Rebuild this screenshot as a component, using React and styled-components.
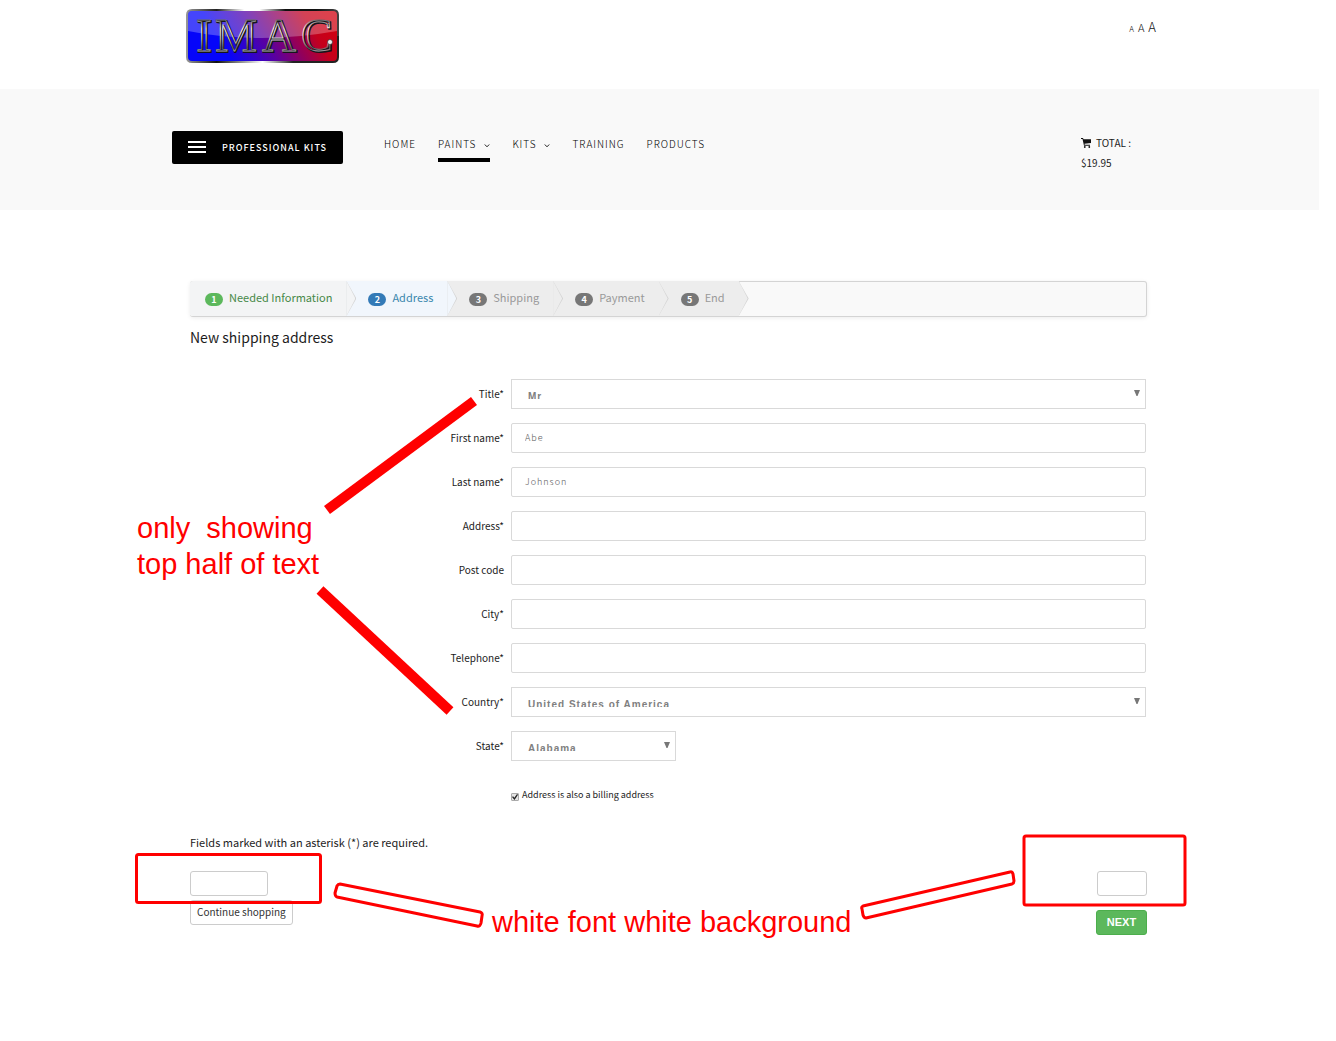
import React from 'react';
import styled, { createGlobalStyle } from 'styled-components';

const GlobalStyle = createGlobalStyle`
  * {
    box-sizing: border-box;
  }

  body {
    margin: 0;
    background: #fff;
    color: #1c1c1c;
    font-family: 'Noto Sans CJK SC', 'Open Sans', sans-serif;
    font-size: 10px;
    line-height: 20px;
  }

  a {
    color: inherit;
    text-decoration: none;
  }
`;

const Page = styled.div`
  position: relative;
  overflow: hidden;
  min-height: 100vh;
`;

// Header

const TopBar = styled.div`
  display: flex;
  justify-content: space-between;
  align-items: flex-start;
  max-width: 996px;
  margin: 0 auto;
  padding: 8px 10px 25px 16px;
`;

const Logo = styled.a`
  display: block;

  svg {
    display: block;
  }
`;

const FontSizer = styled.div`
  display: flex;
  align-items: baseline;
  gap: 4px;
  margin-top: 9px;
`;

const FontSizeButton = styled.button`
  padding: 0;
  border: 0;
  background: none;
  color: #111;
  font-family: inherit;
  font-size: ${(props) => props.$size};
  font-weight: 300;
  line-height: 20px;
`;

const NavBand = styled.div`
  margin-right: 17px;
  background: #f9f9f9;
`;

const NavInner = styled.div`
  display: flex;
  justify-content: center;
  width: calc(100% + 17px);
`;

const NavContent = styled.div`
  display: flex;
  align-items: flex-start;
  width: 100%;
  max-width: 996px;
  min-height: 121px;
  padding: 42px 35px 0 2px;
`;

const KitsButton = styled.button`
  display: flex;
  align-items: center;
  gap: 16px;
  height: 33px;
  padding: 0 16px 1px;
  border: 0;
  border-radius: 2px;
  background: #000;
  color: #fff;
  font-family: inherit;
  font-size: 9px;
  font-weight: 500;
  letter-spacing: 1px;
  white-space: nowrap;
`;

const Nav = styled.nav`
  display: flex;
  gap: 22px;
  flex: 1;
  margin-left: 41px;
`;

const NavLink = styled.a`
  display: flex;
  align-items: center;
  gap: 8px;
  height: 31px;
  padding-bottom: 2px;
  border-bottom: 4px solid ${(props) => (props.$active ? '#000' : 'transparent')};
  color: #000;
  font-size: 10px;
  font-weight: 300;
  letter-spacing: 1px;

  svg {
    margin-top: 4px;
  }
`;

const Cart = styled.a`
  display: block;
  width: 50px;
  margin-top: 2px;
  white-space: nowrap;

  svg {
    margin-right: 5px;
    vertical-align: -1px;
  }
`;

// Checkout

const Main = styled.main`
  max-width: 996px;
  margin: 0 auto;
  padding: 71px 19px 105px 20px;
`;

const Wizard = styled.ol`
  display: flex;
  height: 36px;
  margin: 0;
  padding: 0;
  list-style: none;
  border: 1px solid #d4d4d4;
  border-left: 0;
  border-radius: 3px;
  background: #f9f9f9;
  box-shadow: 0 1px 4px rgba(0, 0, 0, 0.08);
`;

const stepColors = {
  complete: { background: '#f3f4f5', text: '#468847', badge: '#5cb85c' },
  active: { background: '#f1f6fc', text: '#3a87ad', badge: '#337ab7' },
  pending: { background: '#ededed', text: '#999', badge: '#777' },
};

const Step = styled.li`
  position: relative;
  display: flex;
  align-items: center;
  gap: 6px;
  height: 35px;
  margin-top: -1px;
  padding: 0 14px 3px 22px;
  background: ${(props) => stepColors[props.$status].background};
  color: ${(props) => stepColors[props.$status].text};
  font-size: 11px;
  white-space: nowrap;

  &:first-child {
    padding-left: 15px;
    border-radius: 3px 0 0 3px;
  }

  &::before,
  &::after {
    content: '';
    position: absolute;
    top: 0;
    left: 100%;
    z-index: 1;
    width: 10px;
    height: 35px;
    background: #d4d4d4;
    clip-path: polygon(0 0, 100% 50%, 0 100%);
  }

  &::after {
    width: 9px;
    background: ${(props) => stepColors[props.$status].background};
  }
`;

const Badge = styled.span`
  width: 18px;
  height: 13px;
  margin-top: 5px;
  border-radius: 7px;
  background: ${(props) => stepColors[props.$status].badge};
  color: #fff;
  font-size: 9px;
  font-weight: 700;
  line-height: 13px;
  text-align: center;
`;

const Title = styled.h1`
  margin: 10px 0 32px;
  font-size: 14px;
  font-weight: 400;
  line-height: 20px;
`;

const Field = styled.div`
  display: flex;
  align-items: center;
  gap: 7px;
  margin-bottom: 14px;
  padding-right: 1px;
`;

const Label = styled.label`
  flex: 0 0 314px;
  text-align: right;
`;

const Input = styled.input`
  flex: 1;
  min-width: 0;
  height: 30px;
  padding: 0 13px 2px;
  border: 1px solid #d9d9d9;
  border-radius: 2px;
  background: #fff;
  color: #555;
  font-family: inherit;
  font-size: 9px;
  font-weight: 300;
  letter-spacing: 1px;
`;

const SelectBox = styled.div`
  position: relative;
  flex: ${(props) => (props.$short ? '0 0 165px' : '1')};

  svg {
    position: absolute;
    top: 11px;
    right: 6px;
    pointer-events: none;
  }
`;

// The padding leaves 8px for the text, so the bottom of each letter is cut off
const Select = styled.select`
  display: block;
  width: 100%;
  height: 30px;
  padding: 11px 16px 9px;
  border: 1px solid #d9d9d9;
  border-radius: 0;
  background: #fff;
  color: #808080;
  appearance: none;
  font-family: 'Liberation Sans', Arial, sans-serif;
  font-size: 10px;
  font-weight: 700;
  letter-spacing: 1px;
`;

const BillingRow = styled.div`
  display: flex;
  align-items: center;
  gap: 3px;
  margin: 24px 0 27px 321px;
  font-size: 9px;
`;

const Checkbox = styled.input`
  display: grid;
  place-items: center;
  width: 8px;
  height: 8px;
  margin: 4px 0 0;
  appearance: none;
  border: 1px solid #aaa;
  border-radius: 1px;
  background: #e4e4e4;

  &:checked::before {
    content: '';
    width: 6px;
    height: 6px;
    background: #222;
    clip-path: polygon(0 50%, 18% 36%, 38% 62%, 84% 0, 100% 14%, 42% 100%);
  }
`;

const Note = styled.p`
  margin: 0;
  font-size: 11px;
`;

const Actions = styled.div`
  display: flex;
  justify-content: space-between;
  margin-top: 19px;
`;

const ActionGroup = styled.div`
  display: flex;
  flex-direction: column;
  align-items: ${(props) => props.$align};
  gap: ${(props) => props.$gap};
`;

const Button = styled.button`
  min-width: ${(props) => props.$width};
  height: 25px;
  padding: 0 6px 2px;
  border: 1px solid #ccc;
  border-radius: 3px;
  background: #fff;
  color: #333;
  font-family: inherit;
  font-size: 10px;
  line-height: 20px;
`;

const PrimaryButton = styled(Button)`
  border-color: #4cae4c;
  background: #5cb85c;
  color: #fff;
  font-family: 'Liberation Sans', Arial, sans-serif;
  font-size: 11px;
  font-weight: 700;
`;

// Red review marks drawn over the page

const Markup = styled.svg`
  position: absolute;
  top: 0;
  left: 50%;
  z-index: 2;
  margin-left: -668px;
  pointer-events: none;

  text {
    fill: #f00;
    font-family: 'Liberation Sans', Arial, sans-serif;
    font-size: 29px;
    white-space: pre;
  }
`;

const ImacLogo = () => (
  <svg width="155" height="56" viewBox="0 0 155 56" role="img" aria-label="IMAC">
    <defs>
      <linearGradient id="plate" x1="0" y1="0.6" x2="1" y2="0.4">
        <stop offset="0.2" stopColor="#0505fa" />
        <stop offset="0.5" stopColor="#5a00a0" />
        <stop offset="0.85" stopColor="#c4001c" />
        <stop offset="1" stopColor="#d00010" />
      </linearGradient>
      <linearGradient id="rimTop" x1="0" y1="0" x2="1" y2="0">
        <stop offset="0" stopColor="#999" />
        <stop offset="0.2" stopColor="#222" />
        <stop offset="0.38" stopColor="#fff" />
        <stop offset="0.48" stopColor="#fff" />
        <stop offset="0.65" stopColor="#111" />
        <stop offset="0.85" stopColor="#111" />
        <stop offset="1" stopColor="#444" />
      </linearGradient>
      <linearGradient id="rimBottom" x1="0" y1="0" x2="1" y2="0">
        <stop offset="0" stopColor="#999" />
        <stop offset="0.2" stopColor="#111" />
        <stop offset="0.5" stopColor="#fff" />
        <stop offset="0.7" stopColor="#222" />
        <stop offset="1" stopColor="#222" />
      </linearGradient>
      <linearGradient id="metal" x1="0" y1="0" x2="0" y2="1">
        <stop offset="0.2" stopColor="#666" />
        <stop offset="0.38" stopColor="#fff" />
        <stop offset="0.58" stopColor="#ccc" />
        <stop offset="0.75" stopColor="#666" />
        <stop offset="0.9" stopColor="#fff" />
      </linearGradient>
    </defs>
    <path d="M0 28V7Q0 1 6 1H147Q153 1 153 7V28Z" fill="url(#rimTop)" />
    <path d="M0 28V49Q0 55 6 55H147Q153 55 153 49V28Z" fill="url(#rimBottom)" />
    <rect x="2" y="3" width="149" height="50" rx="4" fill="url(#plate)" />
    <path d="M2 7Q2 3 6 3H147Q151 3 151 7V23Q112 30 76 30Q36 30 2 23Z" fill="#fff" opacity="0.26" />
    <g fontFamily="'Liberation Serif', serif" fontSize="47" fill="none">
      <text x="11 30 77 116" y="44" stroke="#15151c" strokeWidth="1.8">IMAC</text>
      <text x="10 29 76 115" y="43" stroke="url(#metal)" strokeWidth="1">IMAC</text>
    </g>
    <circle cx="144" cy="34" r="2.500" fill="#eee" stroke="#222" strokeWidth=".6" />
  </svg>
);

const MenuIcon = () => (
  <svg width="18" height="12" viewBox="0 0 18 12" fill="#fff" aria-hidden="true">
    <path d="M0 0h18v2H0zM0 5h18v2H0zM0 10h18v2H0z" />
  </svg>
);

const Caret = () => (
  <svg width="6" height="4" viewBox="0 0 6 4" fill="none" stroke="#222" aria-hidden="true">
    <path d="M.8 .5L3 2.800L5.200 .5" />
  </svg>
);

const CartIcon = () => (
  <svg width="10" height="10" viewBox="0 0 10 10" fill="#111" aria-hidden="true">
    <path d="M0 0h2l.5 1.300H10V5L3.500 5.800l.2.900H9v1H3L1.500 1H0z" />
    <circle cx="3.800" cy="9" r=".9" />
    <circle cx="8.300" cy="9" r=".9" />
  </svg>
);

const Arrow = () => (
  <svg width="6" height="6" viewBox="0 0 6 6" fill="#777" aria-hidden="true">
    <path d="M0 0H6L3.500 6H2.500Z" />
  </svg>
);

const steps = [
  { label: 'Needed Information', status: 'complete' },
  { label: 'Address', status: 'active' },
  { label: 'Shipping', status: 'pending' },
  { label: 'Payment', status: 'pending' },
  { label: 'End', status: 'pending' },
];

const fields = [
  { id: 'title', label: 'Title*', options: ['Mr', 'Mrs', 'Miss'] },
  { id: 'firstname', label: 'First name*', value: 'Abe' },
  { id: 'lastname', label: 'Last name*', value: 'Johnson' },
  { id: 'street', label: 'Address*' },
  { id: 'postcode', label: 'Post code' },
  { id: 'city', label: 'City*' },
  { id: 'telephone', label: 'Telephone*' },
  { id: 'country', label: 'Country*', options: ['United States of America', 'Canada'] },
  { id: 'state', label: 'State*', options: ['Alabama', 'Alaska', 'Arizona'], short: true },
];

const App = () => {
  return (
    <Page>
      <GlobalStyle />

      <header>
        <TopBar>
          <Logo href="#"><ImacLogo /></Logo>
          <FontSizer>
            <FontSizeButton $size="8px" aria-label="Smaller text">A</FontSizeButton>
            <FontSizeButton $size="11px" aria-label="Normal text">A</FontSizeButton>
            <FontSizeButton $size="13px" aria-label="Larger text">A</FontSizeButton>
          </FontSizer>
        </TopBar>

        <NavBand>
          <NavInner>
            <NavContent>
              <KitsButton><MenuIcon />PROFESSIONAL KITS</KitsButton>
              <Nav>
                <NavLink href="#">HOME</NavLink>
                <NavLink href="#" $active>PAINTS <Caret /></NavLink>
                <NavLink href="#">KITS <Caret /></NavLink>
                <NavLink href="#">TRAINING</NavLink>
                <NavLink href="#">PRODUCTS</NavLink>
              </Nav>
              <Cart href="#">
                <CartIcon />TOTAL :<br />
                $19.95
              </Cart>
            </NavContent>
          </NavInner>
        </NavBand>
      </header>

      <Main>
        <Wizard>
          {steps.map((step, index) => (
            <Step key={step.label} $status={step.status}>
              <Badge $status={step.status}>{index + 1}</Badge>
              {step.label}
            </Step>
          ))}
        </Wizard>

        <Title>New shipping address</Title>

        <form onSubmit={(e) => e.preventDefault()}>
          {fields.map((field) => (
            <Field key={field.id}>
              <Label htmlFor={field.id}>{field.label}</Label>
              {field.options ? (
                <SelectBox $short={field.short}>
                  <Select id={field.id}>
                    {field.options.map((option) => (
                      <option key={option}>{option}</option>
                    ))}
                  </Select>
                  <Arrow />
                </SelectBox>
              ) : (
                <Input id={field.id} type="text" defaultValue={field.value} />
              )}
            </Field>
          ))}

          <BillingRow>
            <Checkbox id="billing" type="checkbox" defaultChecked />
            <label htmlFor="billing">Address is also a billing address</label>
          </BillingRow>

          <Note>Fields marked with an asterisk (*) are required.</Note>

          <Actions>
            <ActionGroup $align="flex-start" $gap="4px">
              <Button type="button" $width="78px" aria-label="Back" />
              <Button type="button">Continue shopping</Button>
            </ActionGroup>
            <ActionGroup $align="flex-end" $gap="14px">
              <Button type="button" $width="50px" aria-label="Save" />
              <PrimaryButton type="submit" $width="51px">NEXT</PrimaryButton>
            </ActionGroup>
          </Actions>
        </form>
      </Main>

      <Markup width="1336" height="1041" viewBox="0 0 1336 1041">
        <g stroke="#f00" strokeWidth="10">
          <path d="M327 510L474 401" />
          <path d="M320 590L450 711" />
        </g>
        <g fill="none" stroke="#f00" strokeWidth="3" strokeLinejoin="round">
          <rect x="136.500" y="854.500" width="184" height="48" rx="2" />
          <rect x="1024" y="836" width="161" height="69" rx="2" />
          <path d="M340 884L480 912Q483 913 482 916L481 923Q480 927 477 926L337 897Q335 896 335 893L337 886Q338 884 340 884Z" />
          <path d="M863 906L1010 872Q1012 871 1013 874L1014 881Q1014 883 1012 884L866 918Q864 918 863 915L862 909Q861 907 863 906Z" />
        </g>
        <text x="137" y="538">only  showing</text>
        <text x="137" y="574">top half of text</text>
        <text x="492" y="932">white font white background</text>
      </Markup>
    </Page>
  );
};

export default App;
